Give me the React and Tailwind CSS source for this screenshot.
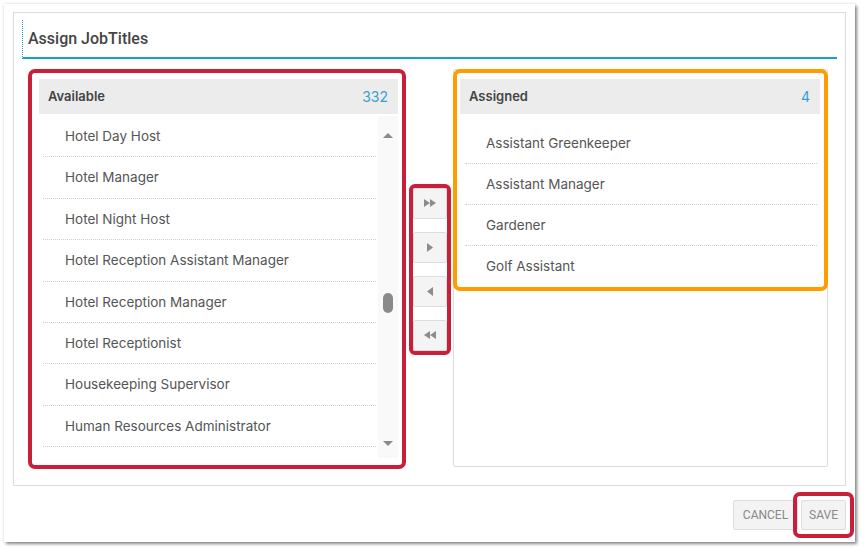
import React from 'react';

const available = [
  'Hotel Day Host',
  'Hotel Manager',
  'Hotel Night Host',
  'Hotel Reception Assistant Manager',
  'Hotel Reception Manager',
  'Hotel Receptionist',
  'Housekeeping Supervisor',
  'Human Resources Administrator',
];

const assigned = ['Assistant Greenkeeper', 'Assistant Manager', 'Gardener', 'Golf Assistant'];

const ListHeader = ({ title, count }) => (
  <div className="h-[35px] shrink-0 bg-[#ececec] flex items-center justify-between pl-[9px] pr-[10px]">
    <span className="text-[13px] font-semibold text-[#444]">{title}</span>
    <span className="text-[14px] text-[#3a9fd0]">{count}</span>
  </div>
);

const MoveButton = ({ children }) => (
  <button className="w-[34px] h-[31px] bg-[#f4f4f4] border border-[#dddddd] rounded-[2px] flex items-center justify-center">
    {children}
  </button>
);

const App = () => {
  return (
    <div className="w-[866px] h-[552px] bg-white pt-[4px] pl-[4px] font-['Inter',sans-serif]">
      <div className="w-[851px] h-[538px] bg-white shadow-[2px_2px_3px_rgba(0,0,0,0.45),0_0_3px_rgba(0,0,0,0.12)] pt-[8px] pl-[9px] pr-[1px] flex flex-col">
        {/* main panel */}
        <div className="w-[833px] h-[474px] border border-[#dcdcdc] px-[8px] pt-[7px] flex flex-col">
          <div className="h-[39px] shrink-0 border-l border-l-[#1a9fd0] [border-left-style:dotted] border-b-2 border-b-[#1aa0cf] [border-bottom-style:solid] pl-[5px] flex items-center">
            <h2 className="text-[16px] font-medium text-[#444] font-['Roboto',sans-serif]">Assign JobTitles</h2>
          </div>

          <div className="flex mt-[10px] pl-[6px]">
            {/* available */}
            <div className="w-[378px] h-[400px] rounded-[7px] border-4 border-[#c8203a] pt-[6px] pl-[7px] pr-[4px] pb-[7px] flex flex-col">
              <ListHeader title="Available" count="332" />
              <div className="flex flex-1 min-h-0 pt-[2px]">
                <div className="w-[333px] ml-[4px] overflow-hidden">
                  {available.map(name => (
                    <div
                      key={name}
                      className="h-[41.4px] border-b border-dotted border-[#cfcfcf] flex items-center pl-[22px] text-[13.5px] text-[#555]"
                    >
                      {name}
                    </div>
                  ))}
                </div>
                <div className="w-[20px] ml-[2px] bg-[#f9f9f9] flex flex-col items-center">
                  <svg width="10" height="5" viewBox="0 0 10 5" className="mt-[17px]">
                    <polygon points="0,5 5,0 10,5" fill="#8a8a8a" />
                  </svg>
                  <div className="w-[10px] h-[20px] rounded-full bg-[#8a8a8a] mt-[155px]" />
                  <svg width="10" height="5" viewBox="0 0 10 5" className="mt-[128px]">
                    <polygon points="0,0 10,0 5,5" fill="#8a8a8a" />
                  </svg>
                </div>
              </div>
            </div>

            {/* move buttons */}
            <div className="self-center ml-[3px] mr-[2px] border-4 border-[#c8203a] rounded-[6px] flex flex-col gap-[13px]">
              <MoveButton>
                <svg width="12" height="8" viewBox="0 0 12 8">
                  <polygon points="0,0 6,4 0,8" fill="#8c8c8c" />
                  <polygon points="6,0 12,4 6,8" fill="#8c8c8c" />
                </svg>
              </MoveButton>
              <MoveButton>
                <svg width="6" height="9" viewBox="0 0 6 9">
                  <polygon points="0,0 6,4.5 0,9" fill="#8c8c8c" />
                </svg>
              </MoveButton>
              <MoveButton>
                <svg width="6" height="9" viewBox="0 0 6 9">
                  <polygon points="6,0 0,4.5 6,9" fill="#8c8c8c" />
                </svg>
              </MoveButton>
              <MoveButton>
                <svg width="12" height="8" viewBox="0 0 12 8">
                  <polygon points="6,0 0,4 6,8" fill="#8c8c8c" />
                  <polygon points="12,0 6,4 12,8" fill="#8c8c8c" />
                </svg>
              </MoveButton>
            </div>

            {/* assigned */}
            <div className="w-[375px] h-[398px] border border-[#dcdcdc] rounded-[2px]">
              <div className="-m-px border-4 border-[#ff9d00] rounded-[7px] pt-[6px] pl-[3px] pr-[4px]">
                <ListHeader title="Assigned" count="4" />
                <div className="mt-[9px] ml-[5px] mr-[3px]">
                  {assigned.map((name, i) => (
                    <div
                      key={name}
                      className={`h-[41px] flex items-center pl-[21px] text-[13.5px] text-[#555] ${
                        i < assigned.length - 1 ? 'border-b border-dotted border-[#cfcfcf]' : ''
                      }`}
                    >
                      {name}
                    </div>
                  ))}
                </div>
              </div>
            </div>
          </div>
        </div>

        {/* footer */}
        <div className="flex justify-end items-center mt-[6px] font-['Roboto',sans-serif]">
          <button className="w-[65px] h-[30px] bg-[#f3f3f3] border border-[#dddddd] rounded-[2px] text-[12px] text-[#888]">
            CANCEL
          </button>
          <div className="-ml-[5px] border-4 border-[#c8203a] rounded-[7px] p-[4px]">
            <button className="w-[45px] h-[30px] bg-[#f3f3f3] border border-[#dddddd] rounded-[2px] text-[12px] text-[#888] block">
              SAVE
            </button>
          </div>
        </div>
      </div>
    </div>
  );
};

export default App;
